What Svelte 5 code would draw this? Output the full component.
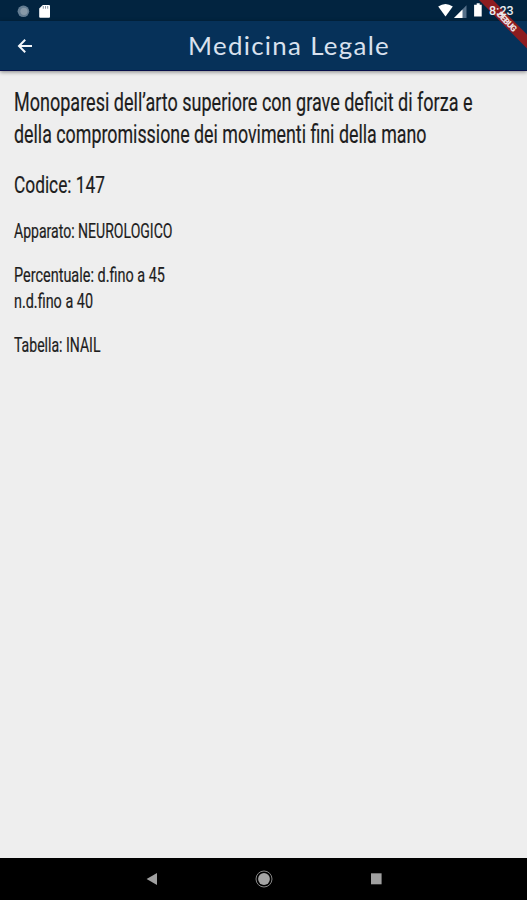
<script>
  const title = { text: 'Medicina Legale', width: 202 };
  const groups = [
    { size: 25, line: 32, gap: 18, lines: [
      { text: 'Monoparesi dell’arto superiore con grave deficit di forza e', width: 458.5 },
      { text: 'della compromissione dei movimenti fini della mano', width: 412.5 }
    ] },
    { size: 24.6, line: 32, gap: 18, lines: [{ text: 'Codice: 147', width: 91 }] },
    { size: 20.4, line: 26, gap: 18, lines: [{ text: 'Apparato: NEUROLOGICO', width: 158.5 }] },
    { size: 20.4, line: 26, gap: 18, lines: [
      { text: 'Percentuale: d.fino a 45', width: 151 },
      { text: 'n.d.fino a 40', width: 79 }
    ] },
    { size: 20.4, line: 26, gap: 0, lines: [{ text: 'Tabella: INAIL', width: 86.5 }] }
  ];
</script>

<div class="screen">
  <div class="status">
    <svg class="left" width="60" height="22" viewBox="0 0 60 22">
      <circle cx="23.4" cy="11.3" r="5.8" fill="#647d92" />
      <circle cx="24" cy="11.3" r="3.6" fill="#8799a8" />
      <path d="M42.8 5h6.2a1 1 0 0 1 1 1v10.8a1 1 0 0 1-1 1h-8.8a1 1 0 0 1-1-1V8.5z" fill="#fff" />
      <path d="M43.3 6v2.7M45.5 6v2.7M47.7 6v2.7" stroke="#8795a3" stroke-width="1" />
    </svg>
    <svg class="signals" width="68" height="22" viewBox="0 0 68 22">
      <path d="M0.2 6.6Q7.5 1.4 14.8 6.6L7.5 16.6z" fill="#fff" />
      <path d="M16 18 28.5 5.3v12.7z" fill="#57718a" />
      <path d="M16 18 24.5 9.5v8.5z" fill="#fff" />
      <path d="M37.2 3.2h3v1.5h2v11.9h-7.6V4.7h2.6z" transform="translate(1.5)" fill="#fff" />
    </svg>
    <span class="time">8:23</span>
  </div>

  <header>
    <svg class="back" width="16" height="16" viewBox="0 0 16 16">
      <path d="M15 8H2.2M8.2 1.8 2 8l6.2 6.2" fill="none" stroke="#f3f6fa" stroke-width="2" />
    </svg>
    <svg class="title" width="204" height="34" viewBox="0 0 204 34">
      <text x="0" y="25.5" textLength={title.width} lengthAdjust="spacingAndGlyphs">{title.text}</text>
    </svg>
  </header>

  <main>
    {#each groups as group}
      <section style:margin-bottom="{group.gap}px">
        {#each group.lines as row}
          <svg class="row" width="490" height={group.line}>
            <text x="0" y={group.line * 0.775 + 0.7} font-size={group.size} textLength={row.width} lengthAdjust="spacingAndGlyphs">{row.text}</text>
          </svg>
        {/each}
      </section>
    {/each}
  </main>

  <nav>
    <svg width="20" height="20" viewBox="0 0 20 20"><path d="M15 4v12L4.6 10z" fill="#a0a0a0" /></svg>
    <svg width="20" height="20" viewBox="0 0 20 20">
      <circle cx="10" cy="10" r="8" fill="none" stroke="#858585" stroke-width="1" />
      <circle cx="10" cy="10" r="5.9" fill="#a4a4a4" />
    </svg>
    <svg width="20" height="20" viewBox="0 0 20 20"><path d="M5 4.3h10.6v11H5z" fill="#a0a0a0" /></svg>
  </nav>

  <svg class="banner" width="50" height="50" viewBox="0 0 50 50">
    <path d="M2 0h14L50 34.5v14z" fill="#8d1c20" />
    <text transform="translate(30.2 21.5) rotate(45)" text-anchor="middle" y="3.2" textLength="24">DEBUG</text>
  </svg>
</div>

<style>
  :global(body) { margin: 0; }
  .screen {
    position: relative;
    width: 527px;
    height: 900px;
    display: flex;
    flex-direction: column;
    overflow: hidden;
    background: #eeeeee;
    font-family: Roboto, sans-serif;
  }
  svg { display: block; }
  .status {
    display: flex;
    align-items: center;
    height: 21px;
    flex: none;
    background: #022440;
  }
  .left { margin-right: 378px; }
  .time {
    position: relative;
    z-index: 2;
    margin-left: -17px;
    font-size: 12.5px;
    line-height: 21px;
    font-weight: 500;
    color: #e9edf1;
  }
  header {
    display: flex;
    align-items: center;
    height: 49px;
    flex: none;
    background: #063159;
    border-bottom: 1px solid #08104a;
    box-shadow: 0 1px 4px rgba(0, 0, 0, 0.45);
  }
  .back { margin-left: 17px; }
  .title {
    margin-left: 155px;
    overflow: visible;
  }
  .title text {
    font-family: Lato, sans-serif;
    font-size: 24.2px;
    letter-spacing: 1.2px;
    fill: #d9e1ee;
  }
  main {
    flex: 1;
    padding: 14px 14px 0;
  }
  .row { overflow: visible; }
  .row text {
    fill: #1d1d1d;
    stroke: #1d1d1d;
    stroke-width: 0.2px;
    font-family: Roboto, sans-serif;
  }
  nav {
    display: flex;
    align-items: center;
    gap: 92px;
    height: 42px;
    flex: none;
    padding-left: 142px;
    background: #000;
  }
  .banner {
    position: absolute;
    top: 0;
    right: 0;
  }
  .banner text {
    font-size: 8.5px;
    font-weight: 900;
    fill: #f1e4e6;
  }
</style>
